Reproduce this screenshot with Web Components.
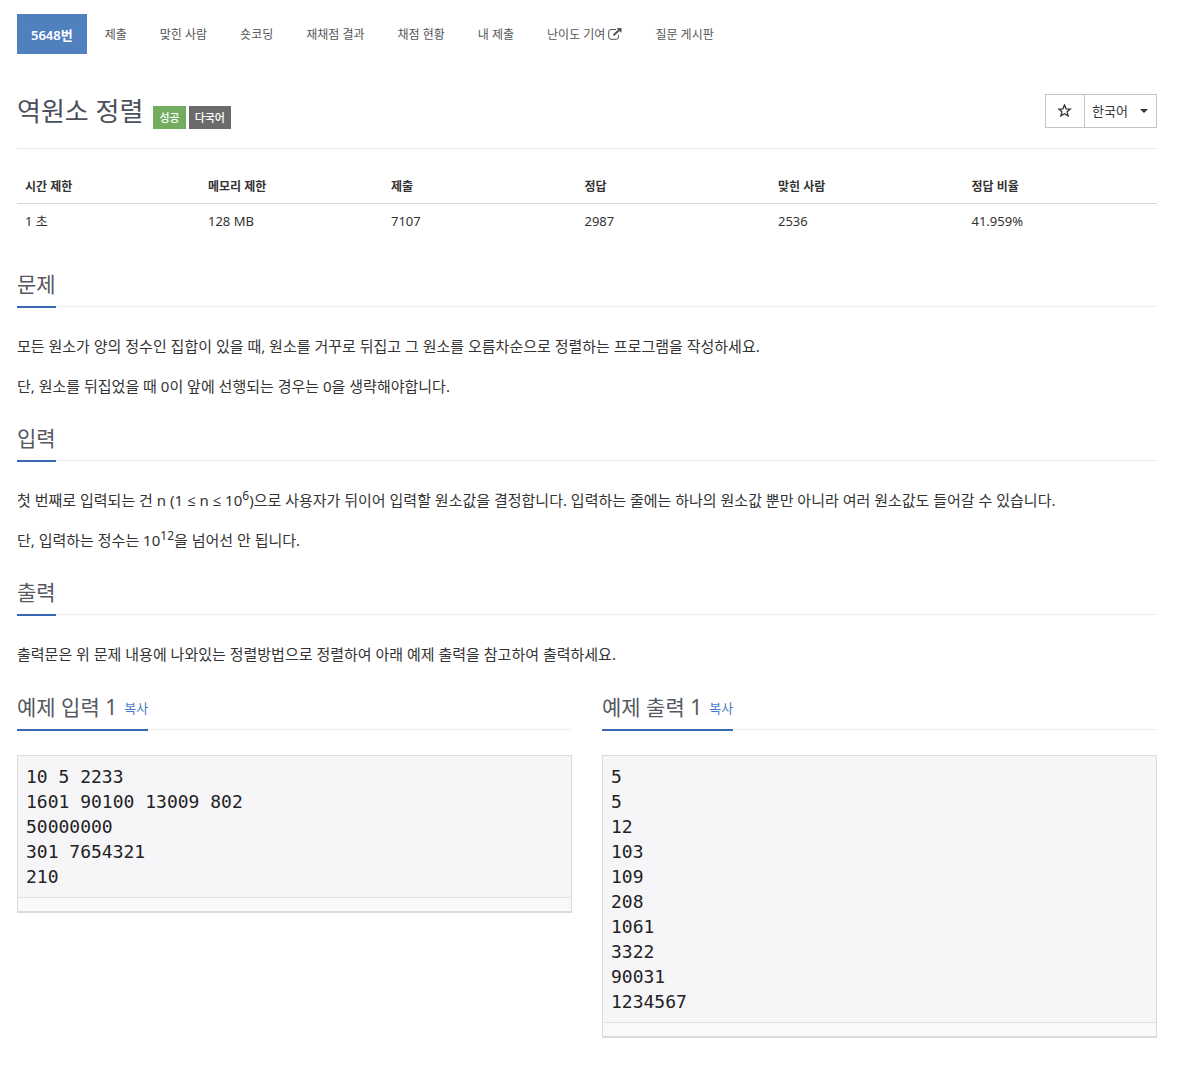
<!DOCTYPE html>
<html lang="ko">
<head>
<meta charset="UTF-8">
<meta name="viewport" content="width=device-width, initial-scale=1">
<title>5648번: 역원소 정렬</title>
<style>
    body {
        margin: 0;
        padding: 14px 30px 28px 17px;
        background: #fff;
        color: #333;
        font-family: "Noto Sans", "Open Sans", "Noto Sans CJK KR", sans-serif;
        font-size: 12px;
    }

    sup {
        font-size: 12px;
        line-height: 0;
    }

    .samples {
        display: grid;
        grid-template-columns: 1fr 1fr;
        align-items: start;
        gap: 30px;
    }
</style>
</head>
<body>
    <problem-menu></problem-menu>
    <main>
        <problem-header>
            역원소 정렬
            <problem-label slot="labels" kind="success">성공</problem-label>
            <problem-label slot="labels" kind="language">다국어</problem-label>
        </problem-header>
        <problem-info></problem-info>
        <problem-section heading="문제">
            <p>모든 원소가 양의 정수인 집합이 있을 때, 원소를 거꾸로 뒤집고 그 원소를 오름차순으로 정렬하는 프로그램을 작성하세요.</p>
            <p>단, 원소를 뒤집었을 때 0이 앞에 선행되는 경우는 0을 생략해야합니다.</p>
        </problem-section>
        <problem-section heading="입력">
            <p>첫 번째로 입력되는 건 n (1 ≤ n ≤ 10<sup>6</sup>)으로 사용자가 뒤이어 입력할 원소값을 결정합니다. 입력하는 줄에는 하나의 원소값 뿐만 아니라 여러 원소값도 들어갈 수 있습니다.</p>
            <p>단, 입력하는 정수는 10<sup>12</sup>을 넘어선 안 됩니다.</p>
        </problem-section>
        <problem-section heading="출력">
            <p>출력문은 위 문제 내용에 나와있는 정렬방법으로 정렬하여 아래 예제 출력을 참고하여 출력하세요.</p>
        </problem-section>
        <div class="samples">
            <sample-data heading="예제 입력 1">10 5 2233
1601 90100 13009 802
50000000
301 7654321
210</sample-data>
            <sample-data heading="예제 출력 1">5
5
12
103
109
208
1061
3322
90031
1234567</sample-data>
        </div>
    </main>

<script>
class ProblemMenu extends HTMLElement {
    constructor() {
        super();
        this.shadowDOM = this.attachShadow({ mode: 'open' });
    }

    connectedCallback() {
        this.render();
    }

    render() {
        const items = ['제출', '맞힌 사람', '숏코딩', '재채점 결과', '채점 현황', '내 제출', '난이도 기여', '질문 게시판'];
        const icon = `
            <svg viewBox="0 0 14 12" width="14" height="12" aria-hidden="true">
                <path d="M8 1.5H3Q.7 1.5 .7 3.8V9Q.7 11.3 3 11.3H8.2Q10.5 11.3 10.5 9V7" fill="none" stroke="currentColor"/>
                <path d="M5.5 7.2 11.5 1.7" fill="none" stroke="currentColor" stroke-width="2"/>
                <path d="M8.6 0H13.5V4.9Z" fill="currentColor"/>
            </svg>`;

        this.shadowDOM.innerHTML = `
        <style>
        :host {
            display: block;
        }

        ul {
            display: flex;
            flex-wrap: wrap;
            gap: 3px;
            margin: 0;
            padding: 0;
            list-style: none;
        }

        a {
            display: flex;
            align-items: center;
            gap: 3px;
            height: 40px;
            padding: 0 15px;
            color: #555;
            text-decoration: none;
        }

        a:hover {
            background: #eee;
        }

        a.active {
            padding: 0 14px;
            background: #5180bf;
            color: #fff;
            font-size: 13px;
            font-weight: 600;
        }
        </style>
        <nav>
            <ul>
                <li><a class="active" href="#problem">5648번</a></li>
                ${items.map(item => `<li><a href="#">${item}${item === '난이도 기여' ? icon : ''}</a></li>`).join('')}
            </ul>
        </nav>
        `;
    }
}

class ProblemLabel extends HTMLElement {
    constructor() {
        super();
        this.attachShadow({ mode: 'open' }).innerHTML = `
        <style>
        :host {
            display: block;
            padding: 0 6px;
            background: #6b6b6b;
            color: #fff;
            font-size: 11px;
            font-weight: 500;
            line-height: 23px;
        }

        :host([kind="success"]) {
            background: #72ac5f;
        }
        </style>
        <slot></slot>
        `;
    }
}

class ProblemHeader extends HTMLElement {
    constructor() {
        super();
        this.attachShadow({ mode: 'open' }).innerHTML = `
        <style>
        :host {
            display: flex;
            justify-content: space-between;
            align-items: flex-start;
            margin-top: 40px;
            padding-bottom: 19px;
            border-bottom: 1px solid #e7e7e7;
        }

        .title {
            display: flex;
            align-items: flex-end;
            gap: 10px;
        }

        h1 {
            margin: 0;
            color: #4b505a;
            font-size: 26px;
            font-weight: 400;
            line-height: 35px;
        }

        .labels {
            display: flex;
            gap: 3px;
        }

        .tools {
            display: flex;
        }

        button, select {
            box-sizing: border-box;
            height: 34px;
            margin: 0;
            border: 1px solid #c4c4c4;
            border-radius: 0;
            background: #fff;
            color: #333;
            font: inherit;
            font-size: 13px;
            cursor: pointer;
        }

        button {
            display: grid;
            place-items: center;
            width: 39px;
            padding: 0;
            border-right: 0;
        }

        .language {
            display: grid;
            align-items: center;
        }

        select {
            grid-area: 1 / 1;
            padding: 0 28px 0 7px;
            appearance: none;
        }

        .caret {
            grid-area: 1 / 1;
            justify-self: end;
            margin-right: 9px;
            pointer-events: none;
        }
        </style>
        <div class="title">
            <h1><slot></slot></h1>
            <div class="labels"><slot name="labels"></slot></div>
        </div>
        <div class="tools">
            <button type="button" aria-label="즐겨찾기">
                <svg viewBox="0 0 14 14" width="14" height="14" aria-hidden="true">
                    <path d="M6.5 .9 8.1 4.8 12.3 5.1 9.1 7.8 10.1 11.9 6.5 9.7 2.9 11.9 3.9 7.8 .7 5.1 4.9 4.8Z" fill="none" stroke="#333" stroke-width="1.3"/>
                </svg>
            </button>
            <div class="language">
                <select aria-label="언어">
                    <option>한국어</option>
                </select>
                <svg class="caret" viewBox="0 0 8 4" width="8" height="4" aria-hidden="true"><path d="M0 0H8L4 4Z" fill="#333"/></svg>
            </div>
        </div>
        `;
    }
}

class ProblemInfo extends HTMLElement {
    constructor() {
        super();
        this.shadowDOM = this.attachShadow({ mode: 'open' });
    }

    connectedCallback() {
        this.render();
    }

    render() {
        const info = {
            '시간 제한': '1 초',
            '메모리 제한': '128 MB',
            '제출': '7107',
            '정답': '2987',
            '맞힌 사람': '2536',
            '정답 비율': '41.959%'
        };

        this.shadowDOM.innerHTML = `
        <style>
        :host {
            display: block;
            margin-top: 20px;
        }

        table {
            width: 100%;
            border-collapse: collapse;
            table-layout: fixed;
        }

        th, td {
            height: 18px;
            padding: 8px;
            line-height: 18px;
            text-align: left;
        }

        th {
            width: 17%;
            padding: 9px 8px 7px;
            border-bottom: 1px solid #d5d5d5;
            font-weight: 700;
        }

        th:nth-child(-n+2) {
            width: 16%;
        }

        td {
            font-size: 13px;
        }
        </style>
        <table>
            <thead>
                <tr>${Object.keys(info).map(name => `<th scope="col">${name}</th>`).join('')}</tr>
            </thead>
            <tbody>
                <tr>${Object.values(info).map(value => `<td>${value}</td>`).join('')}</tr>
            </tbody>
        </table>
        `;
    }
}

class ProblemSection extends HTMLElement {
    constructor() {
        super();
        this.shadowDOM = this.attachShadow({ mode: 'open' });
    }

    connectedCallback() {
        this.render();
    }

    render() {
        this.shadowDOM.innerHTML = `
        <style>
        :host {
            display: block;
            padding-bottom: 10px;
        }

        :host(:first-of-type) {
            padding-top: 32px;
        }

        .headline {
            display: flex;
            height: 36px;
            margin-bottom: 27px;
            border-bottom: 1px solid #eee;
        }

        h2 {
            height: 36px;
            margin: 0;
            border-bottom: 2px solid #3768b4;
            color: #555861;
            font-size: 21px;
            font-weight: 400;
            line-height: 28px;
        }

        ::slotted(p) {
            margin: 0 0 16px;
            font-size: 15px;
            line-height: 24px;
        }
        </style>
        <div class="headline"><h2>${this.getAttribute('heading')}</h2></div>
        <slot></slot>
        `;
    }
}

class SampleData extends HTMLElement {
    constructor() {
        super();
        this.shadowDOM = this.attachShadow({ mode: 'open' });
    }

    connectedCallback() {
        this.render();
    }

    render() {
        this.shadowDOM.innerHTML = `
        <style>
        :host {
            display: block;
        }

        .headline {
            display: flex;
            height: 37px;
            margin-bottom: 25px;
            border-bottom: 1px dotted #ddd;
        }

        .caption {
            display: flex;
            align-items: flex-start;
            gap: 7px;
            height: 37px;
            border-bottom: 2px solid #3768b4;
            line-height: 30px;
        }

        h2 {
            margin: 0;
            color: #555861;
            font-size: 21px;
            font-weight: 400;
        }

        button {
            padding: 1px 0 0;
            border: 0;
            background: none;
            color: #4a7ec4;
            font: inherit;
            font-size: 13px;
            cursor: pointer;
        }

        .box {
            border: 1px solid #dadbe0;
            border-bottom-width: 2px;
            background: #f9f9f9;
        }

        pre {
            margin: 0 0 13px;
            padding: 8px;
            border-bottom: 1px solid #e0e1e5;
            background: #f6f6f8;
            color: #222;
            font-family: "DejaVu Sans Mono", "Liberation Mono", monospace;
            font-size: 18px;
            line-height: 25px;
        }
        </style>
        <div class="headline">
            <div class="caption">
                <h2>${this.getAttribute('heading')}</h2>
                <button type="button">복사</button>
            </div>
        </div>
        <div class="box"><pre><slot></slot></pre></div>
        `;

        this.shadowDOM.querySelector('button').addEventListener('click', () => {
            navigator.clipboard.writeText(this.textContent);
        });
    }
}

customElements.define('problem-menu', ProblemMenu);
customElements.define('problem-label', ProblemLabel);
customElements.define('problem-header', ProblemHeader);
customElements.define('problem-info', ProblemInfo);
customElements.define('problem-section', ProblemSection);
customElements.define('sample-data', SampleData);
</script>
</body>
</html>
